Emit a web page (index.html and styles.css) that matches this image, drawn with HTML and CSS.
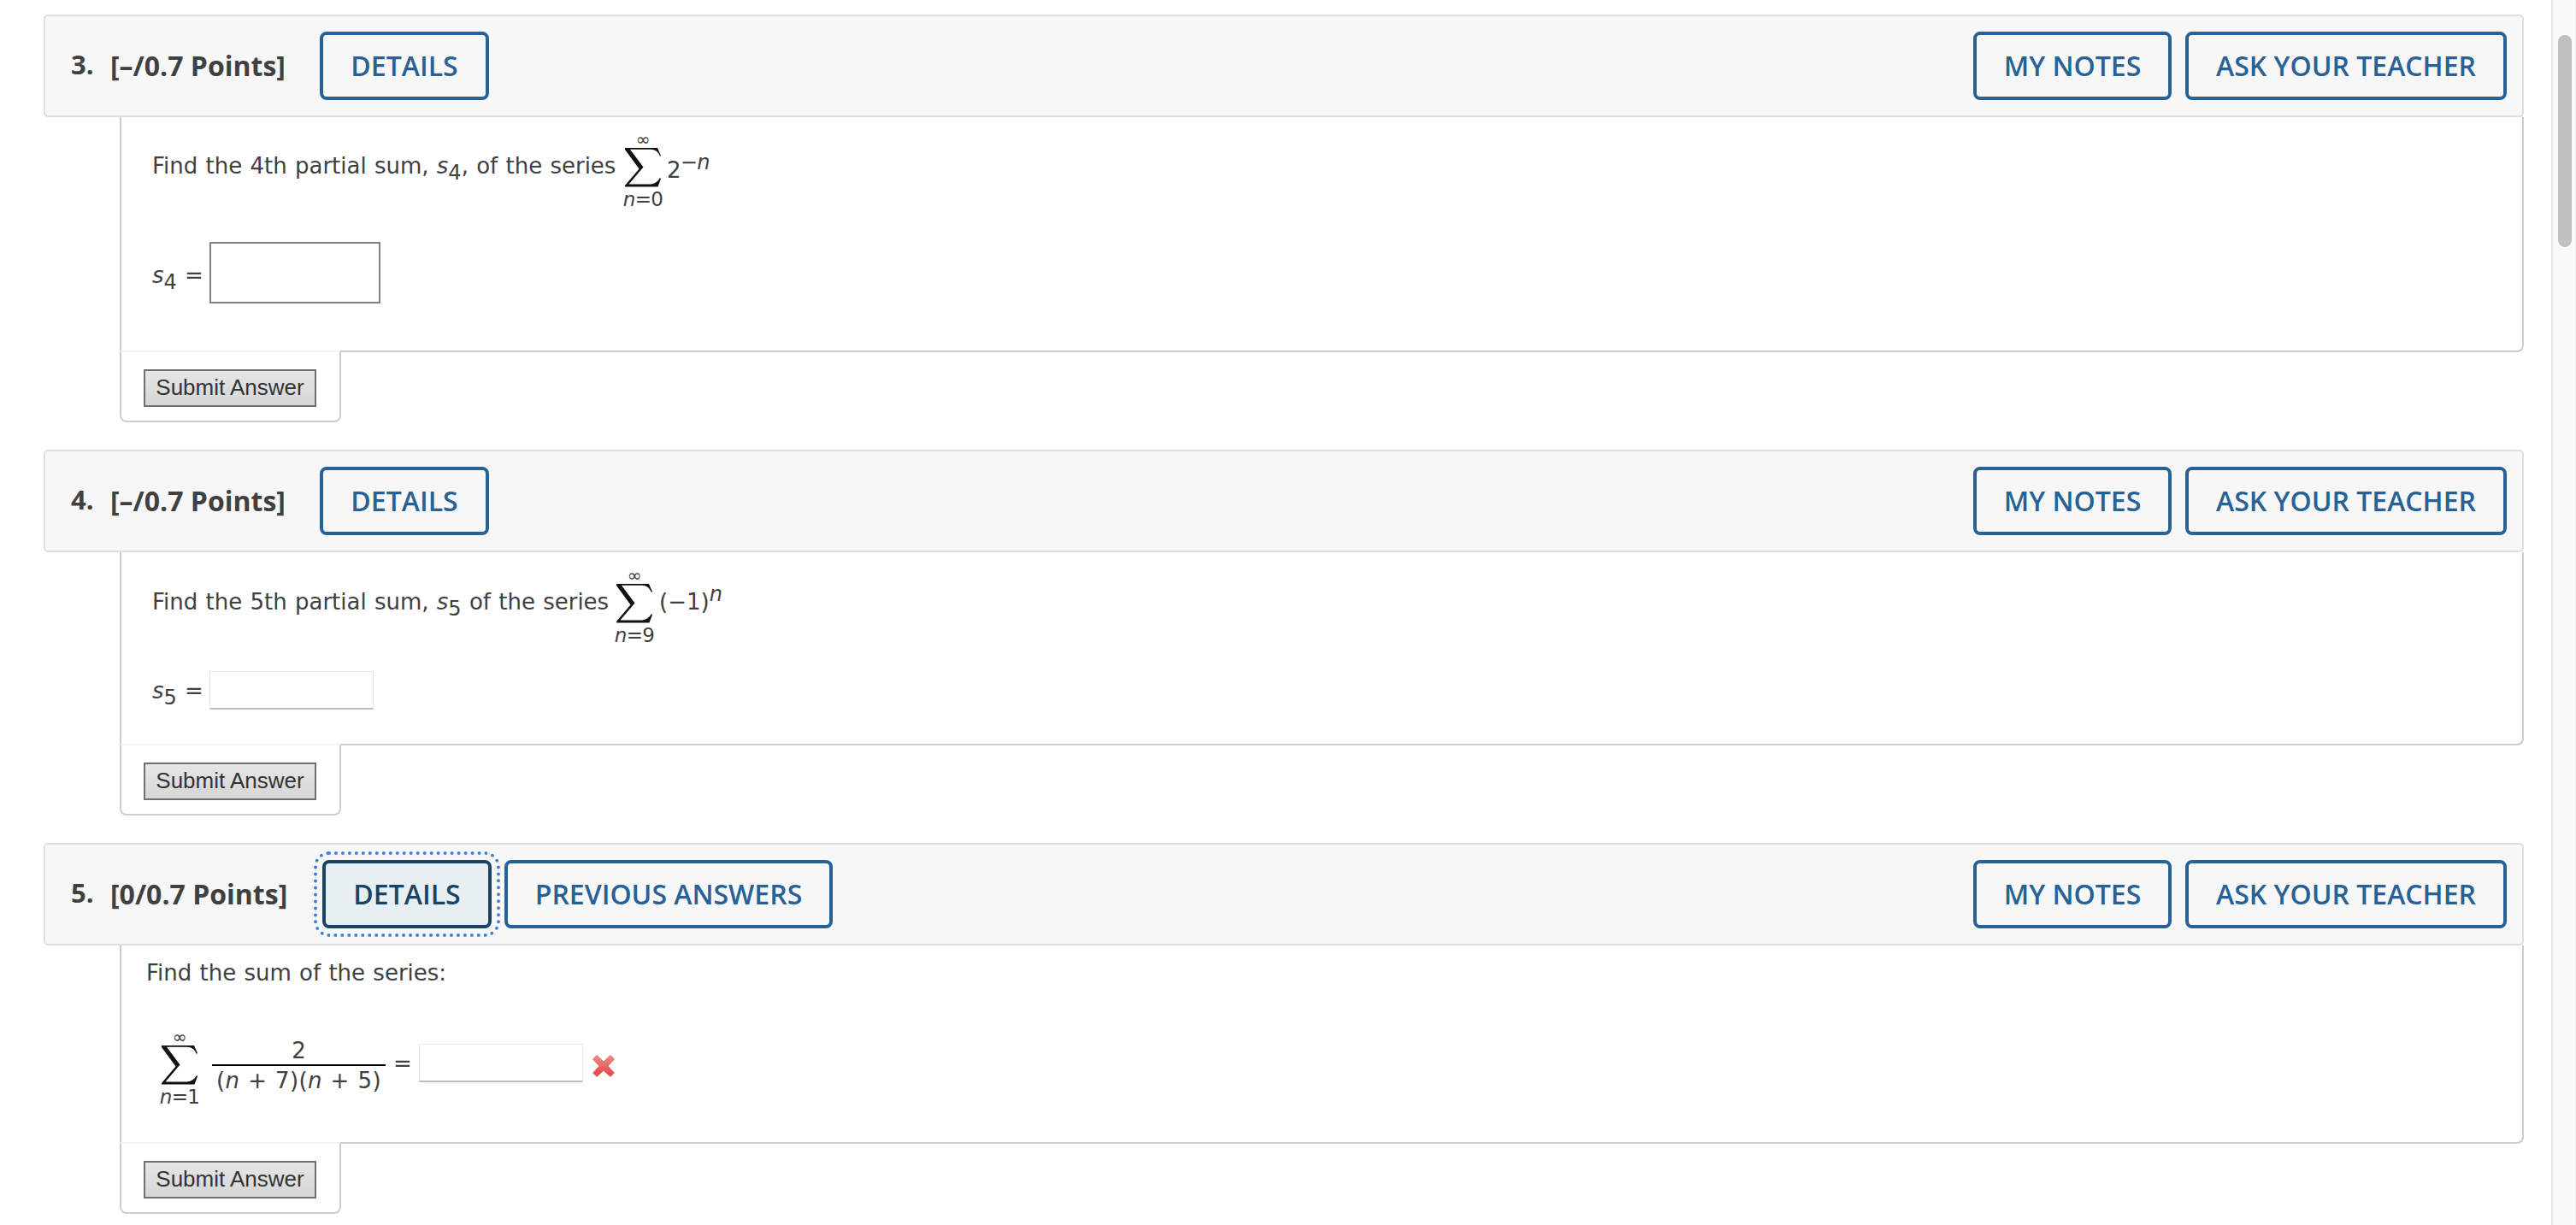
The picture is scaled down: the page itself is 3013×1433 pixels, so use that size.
FILE: index.html
```html
<!DOCTYPE html>
<html lang="en">
<head>
  <meta charset="UTF-8" />
  <meta name="viewport" content="width=device-width, initial-scale=1.0"/>
  <title>Series Homework</title>
  <link rel="stylesheet" href="styles.css">
</head>
<body>

  <!-- Sigma shared by all the sums -->
  <svg class="defs" width="0" height="0">
    <symbol id="sigma" viewBox="0 0 42 46">
      <path d="M0 0H38Q40 5 42 9L41 10Q38 2 30 1.800H6L21.500 22.500L4.500 42.500H30Q37 42 41 35L42 36L38.500 45.500H0V44L16.500 24.500L0 2Z"/>
    </symbol>
  </svg>

  <main class="questions">

    <!-- Question 3 -->
    <section class="question">
      <header class="question-header">
        <span class="number">3.</span>
        <span class="points">[–/0.7 Points]</span>
        <button class="btn">DETAILS</button>
        <div class="header-right">
          <button class="btn btn-notes">MY NOTES</button>
          <button class="btn btn-ask">ASK YOUR TEACHER</button>
        </div>
      </header>
      <div class="question-body body-3">
        <div class="row">
          <span class="text prompt-3">Find the 4th partial sum, <i>s</i><sub>4</sub>, of the series</span>
          <span class="sum">
            <span class="upper">∞</span>
            <svg class="sigma"><use href="#sigma"/></svg>
            <span class="lower"><i>n</i>=0</span>
          </span>
          <span class="text term-3">2<sup>−<i>n</i></sup></span>
        </div>
        <div class="row answer-3">
          <span class="text label"><i>s</i><sub>4</sub> =</span>
          <input class="math-input" type="text">
        </div>
      </div>
      <div class="submit-box"><button class="submit">Submit Answer</button></div>
    </section>

    <!-- Question 4 -->
    <section class="question">
      <header class="question-header">
        <span class="number">4.</span>
        <span class="points">[–/0.7 Points]</span>
        <button class="btn">DETAILS</button>
        <div class="header-right">
          <button class="btn btn-notes">MY NOTES</button>
          <button class="btn btn-ask">ASK YOUR TEACHER</button>
        </div>
      </header>
      <div class="question-body body-4">
        <div class="row">
          <span class="text prompt-4">Find the 5th partial sum, <i>s</i><sub>5</sub> of the series</span>
          <span class="sum">
            <span class="upper">∞</span>
            <svg class="sigma"><use href="#sigma"/></svg>
            <span class="lower"><i>n</i>=9</span>
          </span>
          <span class="text term-4">(−1)<sup><i>n</i></sup></span>
        </div>
        <div class="row answer-4">
          <span class="text label"><i>s</i><sub>5</sub> =</span>
          <input class="text-input" type="text">
        </div>
      </div>
      <div class="submit-box"><button class="submit">Submit Answer</button></div>
    </section>

    <!-- Question 5 -->
    <section class="question">
      <header class="question-header">
        <span class="number">5.</span>
        <span class="points points-5">[0/0.7 Points]</span>
        <button class="btn btn-focused">DETAILS</button>
        <button class="btn btn-previous">PREVIOUS ANSWERS</button>
        <div class="header-right">
          <button class="btn btn-notes">MY NOTES</button>
          <button class="btn btn-ask">ASK YOUR TEACHER</button>
        </div>
      </header>
      <div class="question-body body-5">
        <div class="text">Find the sum of the series:</div>
        <div class="row answer-5">
          <span class="sum">
            <span class="upper">∞</span>
            <svg class="sigma"><use href="#sigma"/></svg>
            <span class="lower"><i>n</i>=1</span>
          </span>
          <span class="fraction">
            <span class="text numerator">2</span>
            <span class="text denominator">(<i>n</i> + 7)(<i>n</i> + 5)</span>
          </span>
          <span class="text equals">=</span>
          <input class="text-input" type="text">
          <svg class="wrong" viewBox="0 0 28 28">
            <defs>
              <linearGradient id="red" x1="0" y1="0" x2="0" y2="1">
                <stop offset="0" stop-color="#f08a88"/>
                <stop offset="1" stop-color="#e04440"/>
              </linearGradient>
            </defs>
            <path fill="url(#red)" stroke="#e57370" stroke-linejoin="round" d="M6 1.500L14 9L22 1.500L26.500 6L19 14L26.500 22L22 26.500L14 19.500L6 26.500L1.500 22L9 14L1.500 6Z"/>
          </svg>
        </div>
      </div>
      <div class="submit-box"><button class="submit">Submit Answer</button></div>
    </section>

  </main>

  <aside class="scrollbar">
    <div class="thumb"></div>
  </aside>

</body>
</html>
```

FILE: styles.css
```css
* {
  box-sizing: border-box;
}

body {
  margin: 0;
  height: 1433px;
  display: flex;
  overflow: hidden;
  background: #fff;
  color: #404040;
  font-family: "DejaVu Sans", sans-serif;
}

.defs {
  position: absolute;
}

.questions {
  flex: 1;
  padding: 17px 32px 0 51px;
}

.question {
  margin-bottom: 32px;
}

/* Header bar */
.question-header {
  display: flex;
  align-items: center;
  height: 120px;
  padding: 0 18px 0 30px;
  background: #f7f7f7;
  border: 2px solid #dedede;
  border-radius: 5px;
  font-family: "Open Sans", sans-serif;
  font-size: 32px;
  font-weight: 700;
  line-height: 44px;
}

.number {
  width: 46px;
  padding-bottom: 4px;
  font-size: 31px;
}

.points {
  width: 245px;
  white-space: nowrap;
}

.points-5 {
  width: 248px;
}

.btn {
  width: 198px;
  height: 80px;
  padding: 0;
  border: 4px solid #286196;
  border-radius: 8px;
  background: transparent;
  color: #286196;
  font-family: "Open Sans", sans-serif;
  font-size: 32px;
  font-weight: 600;
  line-height: 44px;
  white-space: nowrap;
}

.btn-focused {
  background: #e8eff3;
  border-color: #1a4368;
  color: #1a4368;
  outline: 4px dotted #3b82df;
  outline-offset: 6px;
}

.btn-previous {
  width: 384px;
  margin-left: 15px;
}

.header-right {
  display: flex;
  gap: 16px;
  margin-left: auto;
}

.btn-notes {
  width: 232px;
}

.btn-ask {
  width: 376px;
}

/* Question content */
.question-body {
  margin-left: 89px;
  border: 2px solid #ccc;
  border-top: none;
  border-radius: 0 0 8px 0;
}

.body-3 {
  padding: 16px 0 55px 36px;
}

.body-4 {
  padding: 17px 0 40px 36px;
}

.body-5 {
  padding: 16px 0 39px 29px;
}

.row {
  display: flex;
  align-items: flex-start;
}

.text {
  font-size: 26px;
  line-height: 32px;
  word-spacing: 1px;
  white-space: nowrap;
}

sub,
sup {
  font-size: 24px;
  line-height: 0;
}

sub {
  vertical-align: -7px;
}

sup {
  vertical-align: 10px;
}

.prompt-3 {
  width: 551px;
  margin-top: 25px;
}

.prompt-4 {
  width: 541px;
  margin-top: 25px;
}

.term-3 {
  margin: 30px 0 0 5px;
  letter-spacing: -0.7px;
}

.term-4 {
  margin: 25px 0 0 6px;
}

.sum {
  width: 46px;
  display: flex;
  flex-direction: column;
  align-items: center;
}

.upper {
  font-size: 20px;
  line-height: 20px;
}

.sigma {
  width: 42px;
  height: 46px;
  fill: #111;
}

.lower {
  font-size: 23px;
  line-height: 28px;
  letter-spacing: -0.7px;
  white-space: nowrap;
}

.label {
  width: 67px;
}

.answer-3 {
  margin-top: 36px;
}

.answer-3 .label {
  margin-top: 23px;
}

.answer-4 {
  margin-top: 28px;
}

.answer-4 .label {
  margin-top: 7px;
}

.math-input {
  width: 200px;
  height: 72px;
  border: 2px solid #808080;
  background: #fff;
}

.text-input {
  width: 192px;
  height: 45px;
  border: 1px solid #e6e6e6;
  border-bottom: 2px solid #bdbdbd;
  background: #fff;
}

.answer-5 {
  margin: 49px 0 0 16px;
}

.answer-5 .text-input {
  margin-top: 18px;
}

.fraction {
  width: 203px;
  margin: 10px 0 0 15px;
  display: flex;
  flex-direction: column;
  text-align: center;
}

.numerator {
  border-bottom: 2px solid #000;
}

.denominator {
  margin-top: 1px;
  letter-spacing: 0.4px;
}

.equals {
  width: 30px;
  margin: 25px 0 0 9px;
}

.wrong {
  width: 28px;
  height: 28px;
  margin: 30px 0 0 10px;
}

/* Submit tab under the body */
.submit-box {
  width: 259px;
  height: 84px;
  margin: -2px 0 0 89px;
  padding: 20px 0 0 26px;
  background: #fff;
  border: 2px solid #ccc;
  border-top-color: #f3f3f3;
  border-radius: 0 0 8px 8px;
}

.submit {
  display: block;
  width: 202px;
  height: 44px;
  padding: 0 0 2px;
  border: 2px solid #707070;
  border-radius: 0;
  background: linear-gradient(#e6e6e6, #d6d6d6);
  color: #333;
  font-family: "Liberation Sans", sans-serif;
  font-size: 26px;
}

/* Scrollbar */
.scrollbar {
  width: 29px;
  padding: 41px 0 0 6px;
  background: #fafafa;
  border-left: 2px solid #e8e8e8;
  border-right: 1px solid #ededed;
}

.thumb {
  width: 16px;
  height: 248px;
  border-radius: 8px;
  background: #c1c1c1;
}
```
